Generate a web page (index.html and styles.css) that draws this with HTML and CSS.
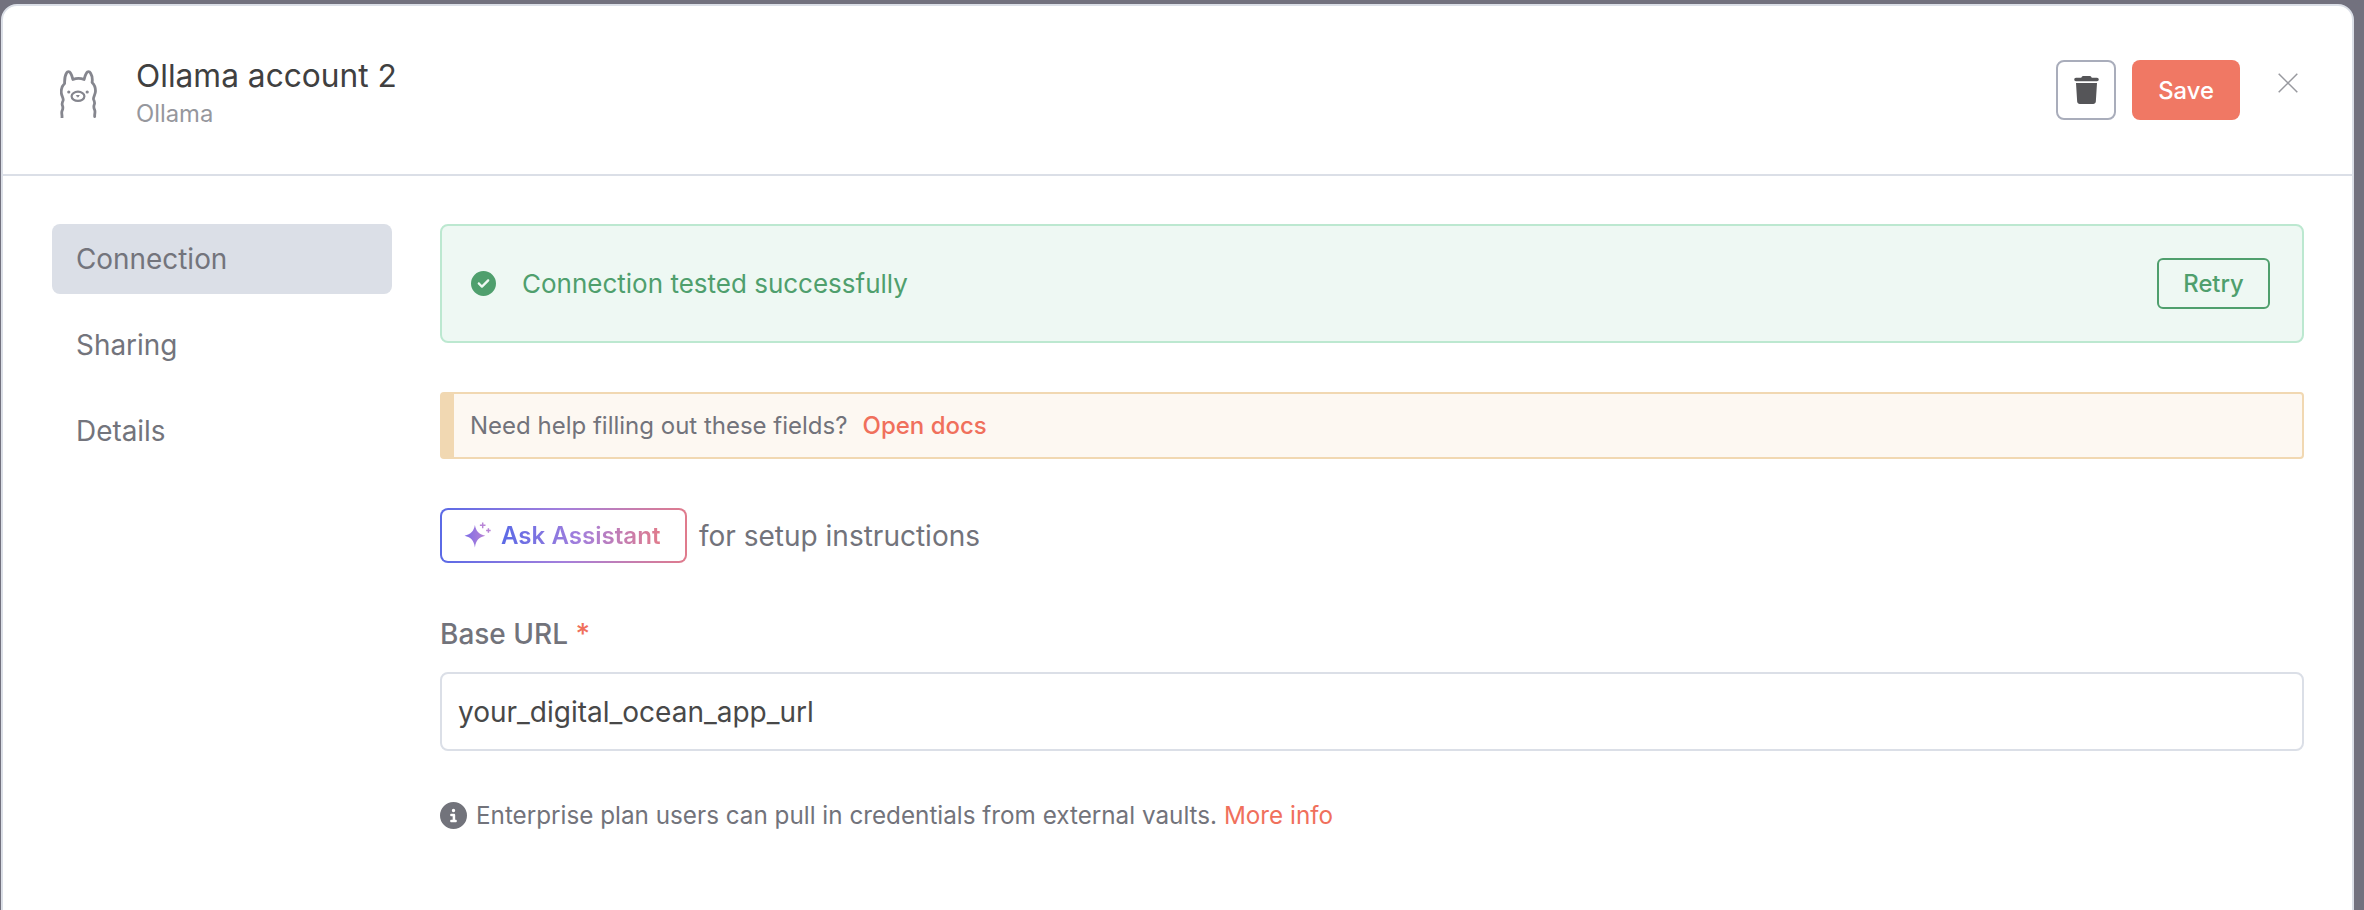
FILE: index.html
```html
<!DOCTYPE html>
<html lang="en">
<head>
<meta charset="utf-8">
<title>Ollama account 2</title>
<link rel="stylesheet" href="styles.css">
</head>
<body>
<svg class="defs" width="0" height="0" aria-hidden="true">
  <defs>
    <linearGradient id="spark" x1="0" y1="0" x2="1" y2="0">
      <stop offset="0" stop-color="#7b6be6"/>
      <stop offset="1" stop-color="#b884d6"/>
    </linearGradient>
  </defs>
</svg>
<div class="dialog">
  <header class="head">
    <div class="identity">
      <svg class="llama" viewBox="0 0 36 48" fill="none" stroke="#85868e" stroke-width="2.800" stroke-linecap="round" stroke-linejoin="round">
        <path d="M1.500 47.500c.3-2.500-.8-4.500 0-6.500.9-2 1.500-3 .4-5.500-.8-1.800-.1-3.200.7-5 .8-2.300-1.900-4.700-1.900-8.500 0-3.500 1.300-6.500 3.400-8.500C4 10 4.500 5.500 6 3c1-1.800 3-1.800 4 0 1.300 2 2 4.500 2.400 6.500 3.600-1.500 7.600-1.500 11.200 0 .4-2 1.100-4.500 2.400-6.500 1-1.800 3-1.800 4 0 1.500 2.500 2 7 1.600 9.500 2.100 2 3.400 5 3.400 8.500 0 3.800-2.700 6.200-1.900 8.500.8 1.800 1.500 3.200.7 5-1.100 2.500-.5 3.500.4 5.500.8 2 -.3 4 0 6.500"/>
        <ellipse cx="17.500" cy="26.300" rx="6.400" ry="4.600" stroke-width="2.200"/>
        <circle cx="8.300" cy="22" r="1" fill="#85868e" stroke-width="1.200"/>
        <circle cx="26.700" cy="22" r="1" fill="#85868e" stroke-width="1.200"/>
        <path d="M16.300 25.500h2.400l-1.200 1.400z" fill="#85868e" stroke-width="1"/>
      </svg>
      <div>
        <div class="title">Ollama account 2</div>
        <div class="subtitle">Ollama</div>
      </div>
    </div>
    <div class="actions">
      <button class="trash-btn" type="button" aria-label="Delete">
        <svg class="trash" viewBox="0 0 448 512"><path d="M135.200 17.700L128 32H32C14.300 32 0 46.300 0 64S14.300 96 32 96H416c17.700 0 32-14.300 32-32s-14.300-32-32-32H320l-7.200-14.300C307.400 6.800 296.300 0 284.200 0H163.800c-12.100 0-23.200 6.800-28.600 17.700zM416 128H32L53.200 467c1.600 25.300 22.600 45 47.900 45H346.900c25.300 0 46.300-19.700 47.900-45L416 128z"/></svg>
      </button>
      <button class="save-btn" type="button">Save</button>
      <svg class="close" viewBox="0 0 20 20" fill="none" stroke="#98999f" stroke-width="1.500"><path d="M.7.700l18.600 18.600M19.300.700L.7 19.300"/></svg>
    </div>
  </header>
  <div class="main">
    <nav class="side">
      <div class="nav-item active">Connection</div>
      <div class="nav-item">Sharing</div>
      <div class="nav-item">Details</div>
    </nav>
    <section class="content">
      <div class="success">
        <svg class="check" viewBox="0 0 512 512"><path d="M256 512A256 256 0 1 0 256 0a256 256 0 1 0 0 512zM369 209L241 337c-9.400 9.400-24.600 9.400-33.900 0l-64-64c-9.400-9.400-9.400-24.600 0-33.900s24.600-9.400 33.900 0l47 47L335 175c9.400-9.400 24.600-9.400 33.900 0s9.400 24.600 0 33.900z"/></svg>
        <span class="success-text">Connection tested successfully</span>
        <button class="retry" type="button">Retry</button>
      </div>
      <div class="hint">Need help filling out these fields?<a class="link docs">Open docs</a></div>
      <div class="ask-row">
        <button class="ask" type="button">
          <svg class="sparkle" viewBox="0 0 26 26">
            <path d="M10.500 3c1.200 6 3.500 8.700 10 10.300-6.500 1.600-8.800 4.200-10 11.200-1.200-7-3.500-9.600-10-11.200 6.500-1.600 8.800-4.300 10-10.300z" fill="url(#spark)"/>
            <path d="M18 .5v5.400M15.300 3.200h5.400M23.500 6v4.400M21.300 8.200h4.400" stroke="#b884d6" stroke-width="1.400" fill="none"/>
          </svg>
          <span class="ask-text">Ask Assistant</span>
        </button>
        <span class="ask-note">for setup instructions</span>
      </div>
      <label class="field-label" for="url">Base URL <span class="req">*</span></label>
      <input class="field" id="url" type="text" value="your_digital_ocean_app_url">
      <div class="info">
        <svg class="info-icon" viewBox="0 0 512 512"><path d="M256 512A256 256 0 1 0 256 0a256 256 0 1 0 0 512zM216 336h24V272H216c-13.300 0-24-10.700-24-24s10.700-24 24-24h48c13.300 0 24 10.700 24 24v88h8c13.300 0 24 10.700 24 24s-10.700 24-24 24H216c-13.300 0-24-10.700-24-24s10.700-24 24-24zm40-208a32 32 0 1 1 0 64 32 32 0 1 1 0-64z"/></svg>
        <span>Enterprise plan users can pull in credentials from external vaults. <a class="link">More info</a></span>
      </div>
    </section>
  </div>
</div>
</body>
</html>
```

FILE: styles.css
```css
* { box-sizing: border-box; }
html, body { height: 100%; }
body {
  margin: 0;
  overflow: hidden;
  background: #72717e;
  font-family: Inter, "Liberation Sans", sans-serif;
  color: #707178;
}
.defs { position: absolute; }
button { font-family: inherit; cursor: pointer; }
.dialog {
  margin: 4px 10px 0 1px;
  height: 920px;
  background: #fff;
  border: 2px solid #dbdfe7;
  border-radius: 16px 16px 0 0;
}
.head {
  height: 170px;
  border-bottom: 2px solid #dbdfe7;
  display: flex;
  align-items: flex-start;
  justify-content: space-between;
  padding: 54px 54px 0 57px;
}
.identity { display: flex; gap: 39px; }
.llama { width: 37px; height: 48px; margin-top: 10px; }
.title { font-size: 31.700px; line-height: 40px; color: #404040; margin-top: -4px; }
.subtitle { font-size: 23.800px; line-height: 30px; color: #96979d; margin-top: 3px; }
.actions { display: flex; align-items: flex-start; gap: 16px; }
.trash-btn {
  width: 60px; height: 60px; padding: 0;
  background: #fff;
  border: 2px solid #a9adbb;
  border-radius: 8px;
  display: flex; align-items: center; justify-content: center;
}
.trash { width: 25px; height: 28px; fill: #555558; }
.save-btn {
  width: 108px; height: 60px; padding: 0;
  background: #f07864;
  border: 0;
  border-radius: 8px;
  color: #fff;
  font-size: 23.800px;
  font-weight: 500;
}
.close { width: 20px; height: 20px; margin: 13px 0 0 22px; }
.main { display: flex; gap: 48px; padding: 48px 48px 0 49px; }
.side { width: 340px; flex: none; display: flex; flex-direction: column; gap: 16px; }
.nav-item {
  height: 70px;
  line-height: 71px;
  padding-left: 24px;
  font-size: 27.900px;
  border-radius: 8px;
  color: #73747c;
}
.nav-item.active { background: #dbdfe7; }
.content { flex: 1; min-width: 0; }
.success {
  height: 119px;
  display: flex; align-items: center;
  padding: 0 32px 0 29px;
  background: #eef8f3;
  border: 2px solid #bce8d0;
  border-radius: 8px;
  color: #4f9f6d;
  font-size: 26px;
}
.check { width: 25px; height: 25px; fill: #4f9f6d; flex: none; }
.success-text { margin-left: 26px; flex: 1; }
.retry {
  width: 113px; height: 51px; padding: 0;
  background: transparent;
  border: 2px solid #4f9f6d;
  border-radius: 6px;
  color: #4f9f6d;
  font-size: 23.800px;
  font-weight: 500;
}
.hint {
  margin-top: 49px;
  height: 67px;
  display: flex; align-items: center;
  padding-left: 16px;
  background: #fdf8f2;
  border: 2px solid #f1d8b2;
  border-left-width: 14px;
  border-radius: 4px;
  font-size: 24px;
  color: #72737b;
}
.link { color: #f0705c; }
.docs { margin-left: 15px; font-weight: 500; }
.ask-row { margin-top: 49px; display: flex; align-items: center; gap: 12px; }
.ask {
  width: 247px; height: 55px; padding: 0 0 0 22px;
  display: flex; align-items: center; gap: 11px;
  background: linear-gradient(#fff, #fff) padding-box, linear-gradient(90deg, #5b6ae6, #a47fdc 50%, #e07b8c) border-box;
  border: 2px solid transparent;
  border-radius: 8px;
  font-size: 24.100px;
  font-weight: 600;
}
.sparkle { width: 27px; height: 27px; flex: none; }
.ask-text {
  margin-left: -1px;
  background: linear-gradient(90deg, #5b6ae6, #a47fdc 50%, #e07b8c);
  -webkit-background-clip: text;
  background-clip: text;
  color: transparent;
}
.ask-note { font-size: 28px; color: #72737b; }
.field-label { display: block; margin-top: 53px; font-size: 28px; line-height: 36px; color: #72737b; font-weight: 500; }
.req { color: #f0705c; }
.field {
  display: block; width: 100%; height: 79px;
  margin-top: 20px;
  padding: 0 16px;
  background: #fff;
  border: 2px solid #dbdfe7;
  border-radius: 8px;
  font-family: inherit;
  font-size: 28px;
  color: #484848;
  outline: none;
}
.info { margin-top: 50px; display: flex; align-items: center; gap: 9px; font-size: 24.250px; color: #72737b; }
.info-icon { width: 27px; height: 27px; fill: #72737b; flex: none; }
```
